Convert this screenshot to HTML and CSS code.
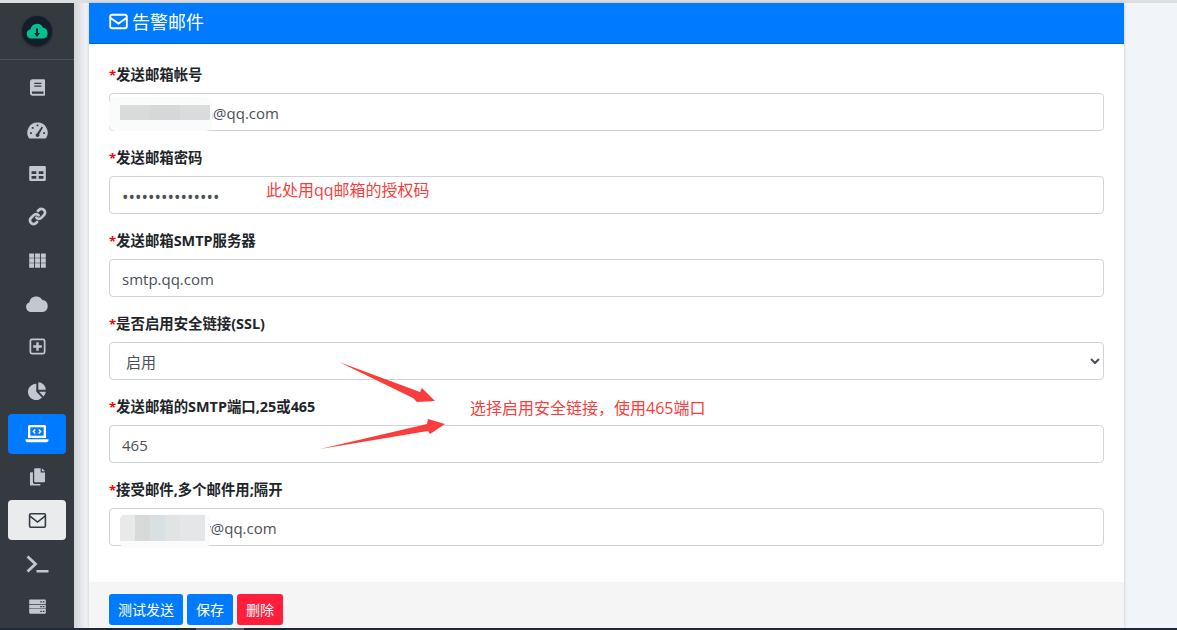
FILE: index.html
```html
<!DOCTYPE html>
<html lang="zh">
<head>
<meta charset="utf-8">
<title>告警邮件</title>
<link rel="stylesheet" href="styles.css">
</head>
<body>
<div class="app">
  <aside class="sidebar">
    <div class="brand">
      <span class="logo">
        <svg viewBox="0 0 24 24" width="24" height="24"><path fill="#05c08e" d="M6.500 19.500a4.700 4.700 0 0 1-1-9.300A6.600 6.600 0 0 1 18 8.800a5.400 5.400 0 0 1 0 10.700z"/><path fill="#10202c" d="M11 9.500h2v4.500h2l-3 4-3-4h2z"/></svg>
      </span>
    </div>
    <nav class="nav">
      <a class="nav-item"><svg class="icon" viewBox="0 0 24 24"><path fill="currentColor" d="M6 1.500h14a1.500 1.500 0 0 1 1.500 1.500v18a1.500 1.500 0 0 1-1.500 1.500H6A3.500 3.500 0 0 1 2.500 19V5A3.500 3.500 0 0 1 6 1.500z"/><path fill="#343a40" d="M8 6h9v1.500H8zM8 9.500h9V11H8zM5 17h14.500v3H5z"/></svg></a>
      <a class="nav-item"><svg class="icon icon-gauge" viewBox="0 0 24 24"><path fill="currentColor" d="M12 3a11.500 11.500 0 0 1 10 17.500 1.500 1.500 0 0 1-1.300.500H3.300a1.500 1.500 0 0 1-1.300-.500A11.500 11.500 0 0 1 12 3z"/><path fill="#343a40" d="M11 5h2v2h-2zM5.500 8h2v2h-2zM3.500 14h2v2h-2zM18.500 14h2v2h-2zM16.800 7.500l1.500 1-4.300 7.500a2.200 2.200 0 1 1-2.400-1z"/></svg></a>
      <a class="nav-item"><svg class="icon" viewBox="0 0 24 24"><path fill="currentColor" d="M3 2.500h18a1.500 1.500 0 0 1 1.500 1.500v16a1.500 1.500 0 0 1-1.500 1.500H3A1.500 1.500 0 0 1 1.500 20V4A1.500 1.500 0 0 1 3 2.500z"/><path fill="#343a40" d="M4.500 9h6v3.500h-6zM13.500 9h6v3.500h-6zM4.500 15h6v3.500h-6zM13.500 15h6v3.500h-6z"/></svg></a>
      <a class="nav-item"><svg class="icon" viewBox="0 0 24 24"><g fill="none" stroke="currentColor" stroke-width="3.400" stroke-linecap="round"><path d="M10.500 13.500a4.500 4.500 0 0 0 6.500 0l3.300-3.300a4.600 4.600 0 0 0-6.500-6.500L12.500 5"/><path d="M13.500 10.500a4.500 4.500 0 0 0-6.500 0l-3.300 3.300a4.600 4.600 0 0 0 6.500 6.500l1.300-1.300"/></g></svg></a>
      <a class="nav-item"><svg class="icon" viewBox="0 0 24 24"><path fill="currentColor" d="M1.500 3h6.200v5.500H1.500zM8.900 3h6.200v5.500H8.900zM16.300 3h6.200v5.500h-6.200zM1.500 9.300h6.200v5.400H1.500zM8.900 9.300h6.200v5.400H8.900zM16.300 9.300h6.200v5.400h-6.200zM1.500 15.500h6.200V21H1.500zM8.900 15.500h6.200V21H8.900zM16.300 15.500h6.200V21h-6.200z"/></svg></a>
      <a class="nav-item"><svg class="icon icon-wide" viewBox="0 0 24 24"><path fill="currentColor" d="M6 20a5 5 0 0 1-1.600-9.700 7 7 0 0 1 13-2.300A6.100 6.100 0 0 1 18 20z"/></svg></a>
      <a class="nav-item"><svg class="icon" viewBox="0 0 24 24"><rect x="3" y="3" width="18" height="18" rx="2" fill="none" stroke="currentColor" stroke-width="2.200"/><path fill="currentColor" d="M10.500 6.500h3v4h4v3h-4v4h-3v-4h-4v-3h4z"/></svg></a>
      <a class="nav-item"><svg class="icon" viewBox="0 0 24 24"><path fill="currentColor" d="M10.500 3.500v10.200l7.200 7.200A10.300 10.300 0 1 1 10.500 3.500z"/><path fill="currentColor" d="M13 1.500a9.800 9.800 0 0 1 9.500 9.500H13zM14 13.500h8.500a10 10 0 0 1-3 6z"/></svg></a>
      <a class="nav-item nav-active"><svg class="icon icon-wide" viewBox="0 0 24 24"><path fill="currentColor" d="M4.500 3h15A1.500 1.500 0 0 1 21 4.500V16H3V4.500A1.500 1.500 0 0 1 4.500 3z"/><path fill="#007bff" d="M5.300 5.300h13.400v8.400H5.300z"/><path fill="currentColor" d="M9.800 7l1 1-1.500 1.500 1.500 1.500-1 1-2.500-2.500zM14.200 7l-1 1 1.500 1.500-1.500 1.500 1 1 2.500-2.500zM.5 17.300h23v1a2 2 0 0 1-2 2h-19a2 2 0 0 1-2-2z"/></svg></a>
      <a class="nav-item"><svg class="icon" viewBox="0 0 24 24"><path fill="currentColor" d="M9 1.500h7v5.500h5.500v11a1.200 1.200 0 0 1-1.200 1.200H9A1.200 1.200 0 0 1 7.800 18V2.700A1.200 1.200 0 0 1 9 1.500zM17.500 1.500l4 4h-4zM3.700 6.500h2.500V19A2.500 2.500 0 0 0 8.700 21.500h7v.8A1.200 1.200 0 0 1 14.500 23.500H3.700a1.200 1.200 0 0 1-1.200-1.200V7.700a1.200 1.200 0 0 1 1.200-1.200z"/></svg></a>
      <a class="nav-item nav-current"><svg class="icon" viewBox="0 0 24 24"><rect x="2" y="3.500" width="20" height="17" rx="1.500" fill="none" stroke="currentColor" stroke-width="2"/><path fill="none" stroke="currentColor" stroke-width="2" d="M2.500 6.500 12 14l9.500-7.500"/></svg></a>
      <a class="nav-item"><svg class="icon icon-wide" viewBox="0 0 24 24"><path fill="none" stroke="currentColor" stroke-width="2.800" d="M2.500 4.500 10.500 12l-8 7.500"/><path fill="currentColor" d="M11.500 18h12v2.500h-12z"/></svg></a>
      <a class="nav-item"><svg class="icon" viewBox="0 0 24 24"><path fill="currentColor" d="M2.500 3h19a1 1 0 0 1 1 1v4.800h-21V4a1 1 0 0 1 1-1zM1.500 9.700h21v4.800h-21zM1.500 15.300h21V20a1 1 0 0 1-1 1h-19a1 1 0 0 1-1-1z"/><path fill="#343a40" d="M15.500 5.300h2v1.500h-2zM18.700 5.300h2v1.500h-2zM15.500 11.300h2v1.500h-2zM18.700 11.300h2v1.500h-2zM15.500 17.300h2v1.500h-2zM18.700 17.300h2v1.500h-2z"/></svg></a>
    </nav>
  </aside>
  <main class="main">
    <section class="card">
      <header class="card-header">
        <svg class="head-icon" viewBox="0 0 24 24"><rect x="1.500" y="3.500" width="21" height="17" rx="2.500" fill="none" stroke="currentColor" stroke-width="2.400"/><path fill="none" stroke="currentColor" stroke-width="2.400" d="M2 7.500 12 14.500l10-7"/></svg>
        <h1 class="card-title">告警邮件</h1>
      </header>
      <form class="card-body">
        <div class="field">
          <label class="field-label"><span class="req">*</span>发送邮箱帐号</label>
          <div class="control-wrap">
            <input class="control" value="123456789m@qq.com">
            <div class="mask mask-one"></div>
          </div>
        </div>
        <div class="field">
          <label class="field-label"><span class="req">*</span>发送邮箱密码</label>
          <input class="control control-pass" type="password" value="abcdefghijklmno">
        </div>
        <div class="field">
          <label class="field-label"><span class="req">*</span>发送邮箱SMTP服务器</label>
          <input class="control" value="smtp.qq.com">
        </div>
        <div class="field">
          <label class="field-label"><span class="req">*</span>是否启用安全链接(SSL)</label>
          <select class="control control-select"><option>启用</option></select>
        </div>
        <div class="field">
          <label class="field-label"><span class="req">*</span>发送邮箱的SMTP端口,25或465</label>
          <input class="control" value="465">
        </div>
        <div class="field">
          <label class="field-label"><span class="req">*</span>接受邮件,多个邮件用;隔开</label>
          <div class="control-wrap">
            <input class="control" value="123456789w@qq.com">
            <div class="mask mask-two"></div>
          </div>
        </div>
      </form>
      <footer class="card-footer">
        <button class="btn btn-blue" type="button">测试发送</button>
        <button class="btn btn-blue" type="button">保存</button>
        <button class="btn btn-red" type="button">删除</button>
      </footer>
      <p class="note note-auth">此处用qq邮箱的授权码</p>
      <p class="note note-ssl">选择启用安全链接，使用465端口</p>
      <svg class="arrows" viewBox="0 0 1035 625">
        <path fill="#fb3c3c" d="M250 359 331 389 333 385 346 398 328 399 324 395z"/>
        <path fill="#fb3c3c" d="M231 446 338 421 339 416 356 421 341 431 339 428z"/>
      </svg>
    </section>
  </main>
</div>
<div class="bottom-bar"><span class="bottom-thumb"></span></div>
</body>
</html>
```

FILE: styles.css
```css
* { box-sizing: border-box; }
html, body { margin: 0; height: 630px; overflow: hidden; }
body {
  display: flex;
  flex-direction: column;
  padding-top: 3px;
  background: #dcdee0;
  font-family: "Open Sans", "Noto Sans CJK SC", sans-serif;
  font-size: 15px;
  color: #495057;
}
.app { flex: 1; min-height: 0; display: flex; }
.sidebar { width: 74px; flex: none; background: #343a40; color: #c2c7d0; }
.brand {
  height: 57px;
  display: flex;
  align-items: center;
  justify-content: center;
  border-bottom: 1px solid #4b545c;
}
.logo {
  width: 30px;
  height: 30px;
  border-radius: 50%;
  background: #141d2b;
  box-shadow: 0 1px 3px rgba(0, 0, 0, .45);
  display: flex;
  align-items: center;
  justify-content: center;
}
.nav {
  display: flex;
  flex-direction: column;
  align-items: center;
  gap: 3.33px;
  padding-top: 7px;
}
.nav-item {
  width: 58px;
  height: 40px;
  flex: none;
  border-radius: 4px;
  display: flex;
  align-items: center;
  justify-content: center;
}
.nav-active { background: #007bff; color: #fff; }
.nav-current { background: #e9ebec; color: #343a40; }
.icon { width: 19px; height: 19px; display: block; }
.icon-wide { width: 24px; height: 24px; }
.icon-gauge { width: 21px; height: 21px; }
.main {
  flex: 1;
  min-width: 0;
  padding-left: 15px;
  padding-right: 53px;
  background: linear-gradient(90deg, #d2d5d9 0, #f7f8fa 15px, #f1f4f8 16px);
}
.card {
  position: relative;
  height: 100%;
  background: #fff;
  box-shadow: 0 0 3px rgba(0, 0, 0, .22);
  display: flex;
  flex-direction: column;
}
.card-header {
  height: 41px;
  flex: none;
  background: #007bff;
  color: #fff;
  display: flex;
  align-items: center;
  gap: 4px;
  padding: 0 0 3px 20px;
  border-bottom: 1px solid #0069d9;
}
.head-icon { width: 19px; height: 19px; }
.card-title { margin: 0; font-size: 18px; font-weight: 400; line-height: 1; }
.card-body { flex: none; padding: 20px 20px 20px; }
.field { margin-bottom: 16px; }
.field-label {
  display: block;
  height: 21px;
  margin-bottom: 8px;
  font-size: 14.4px;
  line-height: 21px;
  font-weight: 700;
  color: #212529;
}
.req { color: #ff0000; font-size: 13px; }
.control-wrap { position: relative; }
.control {
  display: block;
  width: 100%;
  height: 38px;
  padding: 7px 12px 5px;
  border: 1px solid #ced4da;
  border-radius: 4px;
  background: #fff;
  color: #495057;
  font: inherit;
}
.control-pass { font-size: 17.3px; padding-top: 8px; padding-bottom: 4px; }
.mask { position: absolute; pointer-events: none; }
.mask-one {
  left: 0;
  top: 4px;
  width: 103px;
  height: 34px;
  border-radius: 6px;
  background:
    linear-gradient(90deg, #d9dada 0 30px, #d5d7d8 30px 60px, #d9dbdc 60px) 11px 8px / 90px 15px no-repeat,
    #fafbfb;
}
.mask-two {
  left: 11px;
  top: 6px;
  width: 90px;
  height: 34px;
  border-radius: 6px;
  background:
    linear-gradient(90deg, #e8eaea 0 15px, #d8dada 15px 30px, #d8e0e2 30px 45px, #e2e4e4 45px 60px, #e3e7e8 60px 85px, #fbfbfb 85px) 0 1px / 90px 26px no-repeat,
    #fbfbfb;
}
.card-footer {
  flex: 1;
  min-height: 0;
  overflow: hidden;
  background: #f5f5f5;
  padding: 12px 20px 0;
  display: flex;
  gap: 4px;
  align-items: flex-start;
}
.btn {
  height: 31px;
  padding: 0 9px;
  border: 0;
  border-radius: 3px;
  color: #fff;
  font: inherit;
  font-size: 14px;
  line-height: 31px;
}
.btn-blue { background: #007bff; }
.btn-red { background: #ff1f3d; }
.note {
  position: absolute;
  margin: 0;
  color: #fb3c3c;
  white-space: nowrap;
  line-height: 22px;
}
.note-auth { left: 177px; top: 176px; font-size: 16px; }
.note-ssl { left: 381px; top: 394px; font-size: 16px; }
.arrows { position: absolute; left: 0; top: 0; width: 1035px; height: 625px; pointer-events: none; }
.bottom-bar { height: 2px; flex: none; background: #1d2c3a; padding-left: 196px; }
.bottom-thumb { display: block; width: 48px; height: 2px; background: #55646f; }
```
